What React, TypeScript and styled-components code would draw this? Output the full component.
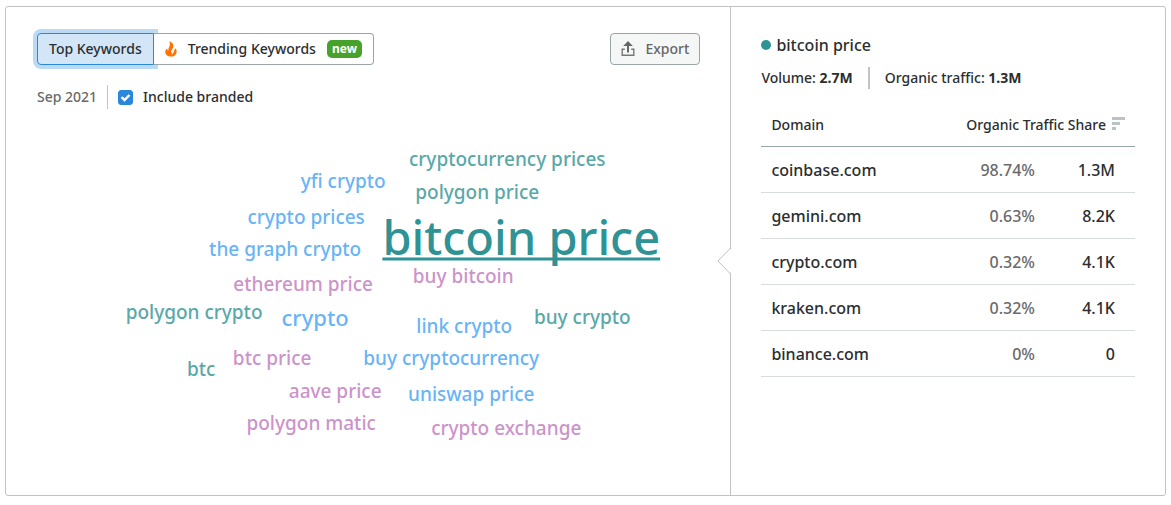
import React, { useState } from "react";
import styled, { createGlobalStyle } from "styled-components";

const GlobalStyle = createGlobalStyle`
  *, *::before, *::after { box-sizing: border-box; }
  body {
    margin: 0;
    padding: 6px 5px 8px;
    background: #fff;
    color: #2b2e2f;
    font-family: "Noto Sans", "Open Sans", sans-serif;
    font-size: 14px;
    font-weight: 500;
    line-height: 24px;
  }
  button { font: inherit; cursor: pointer; }
`;

const Card = styled.section`
  display: flex;
  border: 1px solid #c2c2c2;
  border-radius: 3px;
`;

const CloudPanel = styled.div`
  flex: 1;
  min-width: 0;
  padding: 26px 30px 30px 31px;
`;

const Toolbar = styled.div`
  display: flex;
  justify-content: space-between;
`;

const Pills = styled.div`
  display: flex;
`;

const Pill = styled.button<{ $active: boolean; $side: "left" | "right" }>`
  display: flex;
  align-items: center;
  gap: 11px;
  height: 32px;
  padding: 0 11px;
  color: #2b2e2f;
  white-space: nowrap;
  background: ${(p) => (p.$active ? "#d3e6f8" : "#fff")};
  border: 1px solid ${(p) => (p.$active ? "#2a88dc" : "#98a5a8")};
  border-radius: ${(p) => (p.$side === "left" ? "4px 0 0 4px" : "0 4px 4px 0")};
  box-shadow: ${(p) => (p.$active ? "0 0 0 4px #bbdaf4" : "none")};
  ${(p) => p.$side === "right" && "border-left-width: 0;"}
`;

const Badge = styled.span`
  padding: 0 5px;
  border-radius: 5px;
  background: #47a22c;
  color: #fff;
  font-size: 12px;
  font-weight: 700;
  line-height: 18px;
`;

const ExportButton = styled.button`
  display: flex;
  align-items: center;
  gap: 10px;
  height: 32px;
  padding: 0 10px;
  color: #666;
  background: #f5f7f7;
  border: 1px solid #98a5a8;
  border-radius: 4px;
`;

const Filters = styled.div`
  display: flex;
  align-items: center;
  height: 24px;
  margin-top: 20px;
`;

const Period = styled.span`
  color: #6a6a6a;
  padding-right: 10px;
  border-right: 1px solid #c2c2c2;
`;

const CheckLabel = styled.label`
  display: flex;
  align-items: center;
  gap: 10px;
  padding-left: 10px;
`;

const CheckBox = styled.span`
  display: grid;
  width: 15px;
  height: 15px;
  > * { grid-area: 1 / 1; }
  svg { pointer-events: none; }
`;

const CheckInput = styled.input`
  appearance: none;
  width: 15px;
  height: 15px;
  margin: 0;
  border: 1px solid #98a5a8;
  border-radius: 3px;
  &:checked { background: #2a88dc; border-color: #2a88dc; }
`;

const Cloud = styled.div`
  position: relative;
  height: 340px;
  margin-top: 16px;
`;

const Word = styled.button<{ $color: string; $size: number; $main?: boolean }>`
  position: absolute;
  padding: 0;
  border: 0;
  background: none;
  white-space: nowrap;
  color: ${(p) => p.$color};
  font-size: ${(p) => p.$size}px;
  line-height: 1;
  transform: translate(-50%, -50%);
  ${(p) =>
    p.$main &&
    `text-decoration: underline;
     text-decoration-thickness: 3px;
     text-underline-offset: 3px;
     text-decoration-skip-ink: none;`}
`;

const Details = styled.aside`
  position: relative;
  width: 37.5%;
  padding: 26px 30px 30px;
  border-left: 1px solid #c2c2c2;
`;

const Pointer = styled.svg`
  position: absolute;
  left: -14px;
  top: 240px;
`;

const Title = styled.h2`
  display: flex;
  align-items: center;
  gap: 5px;
  margin: 0;
  font-size: 16px;
  font-weight: 500;
  line-height: 24px;
`;

const Dot = styled.span`
  width: 10px;
  height: 10px;
  border-radius: 50%;
  background: #2f9395;
`;

const Stats = styled.div`
  display: flex;
  margin-top: 10px;
  line-height: 22px;
`;

const Stat = styled.span`
  & + & {
    margin-left: 15px;
    padding-left: 15px;
    border-left: 2px solid #c2c2c2;
  }
`;

const Table = styled.table`
  width: 100%;
  margin-top: 14px;
  border-collapse: separate;
  border-spacing: 0;
`;

const HeadCell = styled.th<{ $right?: boolean }>`
  height: 44px;
  padding: 0 10px;
  border-bottom: 1px solid #98a5a8;
  font-weight: 500;
  text-align: ${(p) => (p.$right ? "right" : "left")};
  white-space: nowrap;
  svg { margin-left: 6px; }
`;

const Cell = styled.td<{ $right?: boolean; $muted?: boolean }>`
  height: 46px;
  padding: 0 ${(p) => (p.$right ? 20 : 10)}px 0 10px;
  border-bottom: 1px solid #d8dcdc;
  font-size: 16px;
  text-align: ${(p) => (p.$right ? "right" : "left")};
  color: ${(p) => (p.$muted ? "#6a6a6a" : "inherit")};
`;

const ValueCell = styled(Cell)`
  width: 80px;
`;

const TEAL = "#5aa8a8";
const BLUE = "#69b4f6";
const PINK = "#cc93cb";

const CANVAS_WIDTH = 663;

type CloudWord = { text: string; x: number; y: number; color: string; size?: number; main?: boolean };

const words: CloudWord[] = [
  { text: "cryptocurrency prices", x: 470, y: 34, color: TEAL },
  { text: "yfi crypto", x: 306, y: 56, color: BLUE },
  { text: "polygon price", x: 440, y: 67, color: TEAL },
  { text: "crypto prices", x: 269, y: 92, color: BLUE },
  { text: "bitcoin price", x: 484, y: 112, color: "#2f9395", size: 47, main: true },
  { text: "the graph crypto", x: 248, y: 124, color: BLUE },
  { text: "buy bitcoin", x: 426, y: 151, color: PINK },
  { text: "ethereum price", x: 266, y: 159, color: PINK },
  { text: "polygon crypto", x: 157, y: 187, color: TEAL },
  { text: "buy crypto", x: 545, y: 192, color: TEAL },
  { text: "crypto", x: 278, y: 192, color: BLUE, size: 22 },
  { text: "link crypto", x: 427, y: 201, color: BLUE },
  { text: "btc price", x: 235, y: 233, color: PINK },
  { text: "buy cryptocurrency", x: 414, y: 233, color: BLUE },
  { text: "btc", x: 164, y: 244, color: TEAL },
  { text: "aave price", x: 298, y: 266, color: PINK },
  { text: "uniswap price", x: 434, y: 269, color: BLUE },
  { text: "polygon matic", x: 274, y: 298, color: PINK },
  { text: "crypto exchange", x: 469, y: 303, color: PINK },
];

const domains = [
  { domain: "coinbase.com", share: "98.74%", traffic: "1.3M" },
  { domain: "gemini.com", share: "0.63%", traffic: "8.2K" },
  { domain: "crypto.com", share: "0.32%", traffic: "4.1K" },
  { domain: "kraken.com", share: "0.32%", traffic: "4.1K" },
  { domain: "binance.com", share: "0%", traffic: "0" },
];

const FlameIcon = () => (
  <svg width="12" height="16" viewBox="0 0 12 16" aria-hidden="true">
    <path
      fill="#ff7300"
      d="M4.200 0.500C7.600 1.200 9 3.600 8.200 6.300C7.700 8 5.900 9.600 6.100 11.300C6.300 12.400 7.400 12.300 8 11.500C8.900 10.300 9.200 8.700 10.700 7.200C11.800 9 12 11 11 12.900C10.100 14.500 8.400 15.500 6 15.500C2.600 15.500 0.300 13.600 0.300 11C0.300 9.200 1.200 8.200 2.200 7.600C2.200 8.600 2.500 9.300 3.200 9.700C3.100 6.600 6.300 4.500 4.200 0.500Z"
    />
    <path fill="#fff" d="M8.600 9.500C8.900 11.800 7.900 13.300 5.900 13.800C7.300 12.900 7.300 11.200 8.600 9.500Z" />
  </svg>
);

const ExportIcon = () => (
  <svg width="14" height="16" viewBox="0 0 14 16" aria-hidden="true">
    <path fill="#666" d="M7 0L11.800 5H8V11.500H6V5H2.200Z" />
    <path fill="none" stroke="#777" strokeWidth="1.400" d="M3.800 8.200H1.200V14.300H12.800V8.200H10.200" />
  </svg>
);

const SortIcon = () => (
  <svg width="13" height="13" viewBox="0 0 13 13" aria-hidden="true">
    <path fill="#bcc3c6" d="M0 0H13V3H0ZM0 5H8V8H0ZM0 10H4V13H0Z" />
  </svg>
);

export default function App() {
  const [tab, setTab] = useState<"top" | "trending">("top");
  const [branded, setBranded] = useState(true);

  return (
    <>
      <GlobalStyle />
      <Card>
        <CloudPanel>
          <Toolbar>
            <Pills>
              <Pill type="button" $side="left" $active={tab === "top"} onClick={() => setTab("top")}>
                Top Keywords
              </Pill>
              <Pill type="button" $side="right" $active={tab === "trending"} onClick={() => setTab("trending")}>
                <FlameIcon />
                Trending Keywords
                <Badge>new</Badge>
              </Pill>
            </Pills>
            <ExportButton type="button">
              <ExportIcon />
              Export
            </ExportButton>
          </Toolbar>
          <Filters>
            <Period>Sep 2021</Period>
            <CheckLabel>
              <CheckBox>
                <CheckInput type="checkbox" checked={branded} onChange={(e) => setBranded(e.target.checked)} />
                <svg width="15" height="15" viewBox="0 0 15 15" aria-hidden="true">
                  <path fill="none" stroke="#fff" strokeWidth="2.400" d="M3.500 7.200L6.500 10L11.500 5" />
                </svg>
              </CheckBox>
              Include branded
            </CheckLabel>
          </Filters>
          <Cloud>
            {words.map((w) => (
              <Word
                key={w.text}
                type="button"
                $color={w.color}
                $size={w.size ?? 19}
                $main={w.main}
                style={{ left: `${(w.x / CANVAS_WIDTH) * 100}%`, top: w.y }}
              >
                {w.text}
              </Word>
            ))}
          </Cloud>
        </CloudPanel>
        <Details>
          <Pointer width="15" height="28" viewBox="0 0 15 28" aria-hidden="true">
            <path fill="#fff" d="M15 1L1 14L15 27Z" />
            <path fill="none" stroke="#c2c2c2" d="M13.500 1L1 14L13.500 27" />
          </Pointer>
          <Title>
            <Dot />
            bitcoin price
          </Title>
          <Stats>
            <Stat>
              Volume: <b>2.7M</b>
            </Stat>
            <Stat>
              Organic traffic: <b>1.3M</b>
            </Stat>
          </Stats>
          <Table>
            <thead>
              <tr>
                <HeadCell scope="col">Domain</HeadCell>
                <HeadCell scope="colgroup" colSpan={2} $right>
                  Organic Traffic Share
                  <SortIcon />
                </HeadCell>
              </tr>
            </thead>
            <tbody>
              {domains.map((d) => (
                <tr key={d.domain}>
                  <Cell>{d.domain}</Cell>
                  <Cell $right $muted>
                    {d.share}
                  </Cell>
                  <ValueCell $right>{d.traffic}</ValueCell>
                </tr>
              ))}
            </tbody>
          </Table>
        </Details>
      </Card>
    </>
  );
}
